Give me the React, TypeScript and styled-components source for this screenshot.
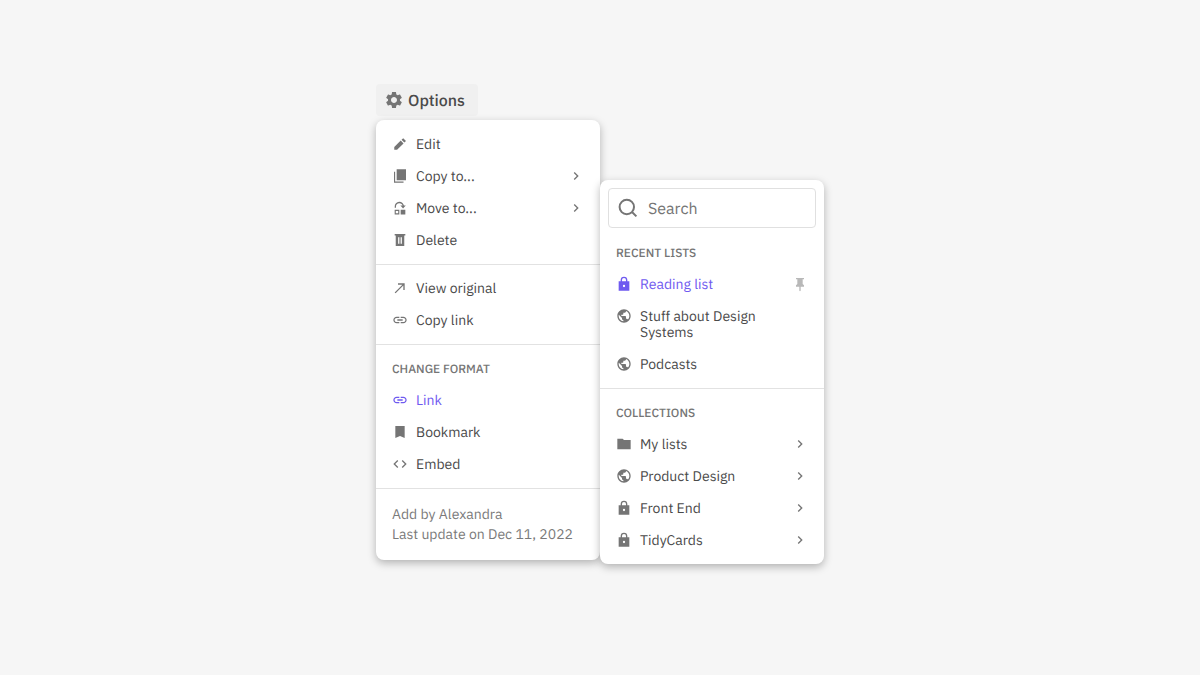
import { ReactNode } from "react";
import styled, { createGlobalStyle } from "styled-components";

const GlobalStyle = createGlobalStyle`
  * {
    box-sizing: border-box;
  }

  body {
    margin: 0;
    background: #f6f6f6;
    color: #4a4a4a;
    font: 14px/16px "IBM Plex Sans", Roboto, "Liberation Sans", sans-serif;
    text-rendering: geometricPrecision;
  }
`;

const Page = styled.main`
  display: flex;
  flex-direction: column;
  align-items: flex-start;
  width: 1200px;
  height: 675px;
  padding: 84px 0 0 376px;
`;

const OptionsButton = styled.button`
  display: flex;
  align-items: center;
  gap: 4px;
  width: 102px;
  height: 32px;
  padding: 0 8px;
  margin-bottom: 4px;
  border: none;
  border-radius: 4px;
  background: #f0f0f0;
  color: #4a4a4a;
  font: 500 16px/20px "IBM Plex Sans", Roboto, "Liberation Sans", sans-serif;
  text-align: left;
  text-rendering: inherit;
`;

const MenuGroup = styled.div`
  display: flex;
  align-items: flex-start;
`;

const Menu = styled.div<{ $offset?: number }>`
  width: 224px;
  margin-top: ${({ $offset }) => $offset ?? 0}px;
  border-radius: 8px;
  background: #fff;
  box-shadow: 0 3px 8px rgba(0, 0, 0, 0.28);
`;

const Section = styled.div`
  padding: 8px 0;

  & + & {
    padding-top: 7px;
    border-top: 1px solid #e2e2e2;
  }
`;

const SectionTitle = styled.h2`
  margin: 0;
  padding: 10px 16px 6px;
  color: #757575;
  font-size: 12px;
  font-weight: 500;
  line-height: 16px;
`;

const Item = styled.div<{ $active?: boolean }>`
  display: flex;
  align-items: flex-start;
  gap: 8px;
  padding: 8px 16px;
  color: ${({ $active }) => ($active ? "#6f5af0" : "#4a4a4a")};
`;

const Label = styled.span`
  flex: 1;
  white-space: pre-line;
`;

const LargeLabel = styled(Label)`
  padding-top: 2px;
`;

const Icon = styled.svg<{ $size?: number; $color?: string }>`
  flex: none;
  width: ${({ $size }) => $size ?? 16}px;
  height: ${({ $size }) => $size ?? 16}px;
  fill: ${({ $color }) => $color ?? "#757575"};
`;

const Footer = styled.div`
  padding: 8px 16px;
  color: #7a7a7a;
  line-height: 20px;
`;

const FooterLine = styled.p`
  margin: 0;
  white-space: nowrap;
`;

const SearchBox = styled.div`
  display: flex;
  align-items: center;
  gap: 8px;
  height: 40px;
  margin: 0 8px 8px;
  padding: 0 7px;
  border: 1px solid #e0e0e0;
  border-radius: 4px;
  color: #757575;
  font-size: 16px;
`;

const icons: Record<string, ReactNode> = {
  settings: (
    <path d="M19.14 12.94c.04-.3.06-.61.06-.94 0-.32-.02-.64-.07-.94l2.03-1.58c.18-.14.23-.41.12-.61l-1.92-3.32c-.12-.22-.37-.29-.59-.22l-2.39.96c-.5-.38-1.03-.7-1.62-.94l-.36-2.54c-.04-.24-.24-.41-.48-.41h-3.84c-.24 0-.43.17-.47.41l-.36 2.54c-.59.24-1.13.57-1.62.94l-2.39-.96c-.22-.08-.47 0-.59.22L2.74 8.87c-.12.21-.08.47.12.61l2.03 1.58c-.05.3-.09.63-.09.94s.02.64.07.94l-2.03 1.58c-.18.14-.23.41-.12.61l1.92 3.32c.12.22.37.29.59.22l2.39-.96c.5.38 1.03.7 1.62.94l.36 2.54c.05.24.24.41.48.41h3.84c.24 0 .44-.17.47-.41l.36-2.54c.59-.24 1.13-.56 1.62-.94l2.39.96c.22.08.47 0 .59-.22l1.92-3.32c.12-.22.07-.47-.12-.61l-2.01-1.58zM12 15.6c-1.98 0-3.6-1.62-3.6-3.6s1.62-3.6 3.6-3.6 3.6 1.62 3.6 3.6-1.62 3.6-3.6 3.6z" />
  ),
  edit: (
    <path d="M3.4 16.6v4.2h4.2l9.7-9.7-4.2-4.2-9.7 9.7zM21 7.4l-4.2-4.2-2.5 2.5 4.2 4.2L21 7.4z" />
  ),
  copy: <path d="M7 2h14v16.2H7zM3 5.5h1.7v14.8h12.6V22H3z" />,
  move: (
    <>
      <path
        d="M5 11.8V10a6 6 0 0 1 12-.5"
        fill="none"
        stroke="#757575"
        strokeWidth="1.9"
      />
      <path d="M12.6 8.2h8L16.6 12.6z" />
      <path d="M4 14.8h7v6.8H4zm1.7 1.7v3.4h3.6v-3.4zM13 14.8h7v6.8h-7z" fillRule="evenodd" />
    </>
  ),
  trash: (
    <path
      d="M4 3h16v2.4H4zM5.6 5.4h12.8V21H5.6zM9.2 8v9.8h1.9V8zM12.9 8v9.8h1.9V8z"
      fillRule="evenodd"
    />
  ),
  external: <path d="M9 5v2h6.59L4 18.59 5.41 20 17 8.41V15h2V5z" />,
  link: (
    <path d="M3.9 12c0-1.71 1.39-3.1 3.1-3.1h4V7H7c-2.76 0-5 2.24-5 5s2.24 5 5 5h4v-1.9H7c-1.71 0-3.1-1.39-3.1-3.1zM8 13h8v-2H8v2zm9-6h-4v1.9h4c1.71 0 3.1 1.39 3.1 3.1s-1.39 3.1-3.1 3.1h-4V17h4c2.76 0 5-2.24 5-5s-2.24-5-5-5z" />
  ),
  bookmark: <path d="M19 3H5v18l7-3 7 3z" />,
  code: (
    <path d="M9.4 16.6 4.8 12l4.6-4.6L8 6l-6 6 6 6 1.4-1.4zm5.2 0 4.6-4.6-4.6-4.6L16 6l6 6-6 6-1.4-1.4z" />
  ),
  chevron: <path d="M10 6 8.59 7.41 13.17 12l-4.58 4.59L10 18l6-6z" />,
  search: (
    <path
      d="M18 11a7.2 7.2 0 1 1-14.4 0 7.2 7.2 0 0 1 14.4 0zM16 16l4.4 4.4"
      fill="none"
      stroke="#757575"
      strokeWidth="2"
    />
  ),
  lock: (
    <path
      d="M20 8h-3V6A5 5 0 0 0 7 6v2H4v14h16zM9 8V6a3 3 0 0 1 6 0v2zM12 16.7a1.7 1.7 0 1 1 0-3.4 1.7 1.7 0 0 1 0 3.4z"
      fillRule="evenodd"
    />
  ),
  globe: (
    <path d="M12 2C6.48 2 2 6.48 2 12s4.48 10 10 10 10-4.48 10-10S17.52 2 12 2zm-1 17.93c-3.95-.49-7-3.85-7-7.93 0-.62.08-1.21.21-1.79L9 15v1c0 1.1.9 2 2 2v1.93zm6.9-2.54c-.26-.81-1-1.39-1.9-1.39h-1v-3c0-.55-.45-1-1-1H8v-2h2c.55 0 1-.45 1-1V7h2c1.1 0 2-.9 2-2v-.41c2.93 1.19 5 4.06 5 7.41 0 2.08-.8 3.97-2.1 5.39z" />
  ),
  folder: <path d="m12 6-2-2H2v16h20V6z" />,
  pin: <path d="M16 5h2V3H6v2h2v7l-2 2v2h5v6l1 1 1-1v-6h5v-2l-2-2z" />,
};

type MenuIconProps = { name: string; size?: number; color?: string };

const MenuIcon = ({ name, size, color }: MenuIconProps) => (
  <Icon viewBox="0 0 24 24" $size={size} $color={color} aria-hidden>
    {icons[name]}
  </Icon>
);

type MenuItemProps = {
  icon: string;
  label: string;
  active?: boolean;
  end?: "chevron" | "pin";
};

const MenuItem = ({ icon, label, active, end }: MenuItemProps) => (
  <Item $active={active}>
    <MenuIcon name={icon} color={active ? "#6f5af0" : undefined} />
    <Label>{label}</Label>
    {end && <MenuIcon name={end} color={end === "pin" ? "#b8b8b8" : undefined} />}
  </Item>
);

const App = () => {
  return (
    <>
      <GlobalStyle />
      <Page>
        <OptionsButton>
          <MenuIcon name="settings" size={20} />
          <LargeLabel>Options</LargeLabel>
        </OptionsButton>

        <MenuGroup>
          <Menu>
            <Section>
              <MenuItem icon="edit" label="Edit" />
              <MenuItem icon="copy" label="Copy to..." end="chevron" />
              <MenuItem icon="move" label="Move to..." end="chevron" />
              <MenuItem icon="trash" label="Delete" />
            </Section>
            <Section>
              <MenuItem icon="external" label="View original" />
              <MenuItem icon="link" label="Copy link" />
            </Section>
            <Section>
              <SectionTitle>CHANGE FORMAT</SectionTitle>
              <MenuItem icon="link" label="Link" active />
              <MenuItem icon="bookmark" label="Bookmark" />
              <MenuItem icon="code" label="Embed" />
            </Section>
            <Section>
              <Footer>
                <FooterLine>Add by Alexandra</FooterLine>
                <FooterLine>Last update on Dec 11, 2022</FooterLine>
              </Footer>
            </Section>
          </Menu>

          <Menu $offset={60}>
            <Section>
              <SearchBox>
                <MenuIcon name="search" size={24} />
                <LargeLabel>Search</LargeLabel>
              </SearchBox>
              <SectionTitle>RECENT LISTS</SectionTitle>
              <MenuItem icon="lock" label="Reading list" active end="pin" />
              <MenuItem icon="globe" label={"Stuff about Design\nSystems"} />
              <MenuItem icon="globe" label="Podcasts" />
            </Section>
            <Section>
              <SectionTitle>COLLECTIONS</SectionTitle>
              <MenuItem icon="folder" label="My lists" end="chevron" />
              <MenuItem icon="globe" label="Product Design" end="chevron" />
              <MenuItem icon="lock" label="Front End" end="chevron" />
              <MenuItem icon="lock" label="TidyCards" end="chevron" />
            </Section>
          </Menu>
        </MenuGroup>
      </Page>
    </>
  );
};

export default App;
